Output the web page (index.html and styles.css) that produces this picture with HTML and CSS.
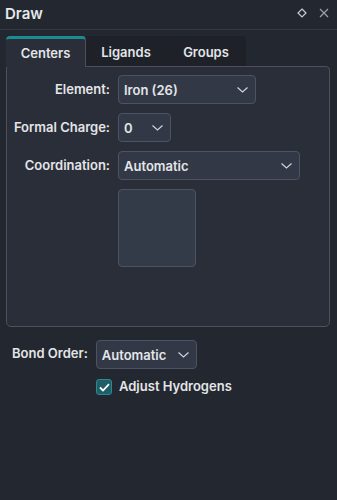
FILE: index.html
```html
<!DOCTYPE html>
<html>
<head>
<meta charset="utf-8">
<link rel="stylesheet" href="styles.css">
</head>
<body>
<div class="panel">
  <div class="titlebar">
    <span class="title">Draw</span>
    <div class="title-icons">
      <svg width="10" height="10" viewBox="0 0 10 10"><path d="M5 1 L9 5 L5 9 L1 5 Z" fill="none" stroke="#c8ccd4" stroke-width="1.2"/></svg>
      <svg width="10" height="10" viewBox="0 0 10 10"><path d="M1 1 L9 9 M9 1 L1 9" fill="none" stroke="#9ba1ab" stroke-width="1.2"/></svg>
    </div>
  </div>
  <div class="tabs">
    <div class="tab active">Centers</div>
    <div class="tab">Ligands</div>
    <div class="tab">Groups</div>
  </div>
  <div class="pane">
    <div class="form">
      <label class="lbl">Element:</label>
      <div class="select w-element"><span>Iron (26)</span><svg class="chev" width="11" height="6" viewBox="0 0 11 6"><path d="M0.5 0.5 L5.5 5 L10.5 0.5" fill="none" stroke="#d0d3d9" stroke-width="1.2"/></svg></div>
      <label class="lbl">Formal Charge:</label>
      <div class="select w-charge"><span>0</span><svg class="chev" width="11" height="6" viewBox="0 0 11 6"><path d="M0.5 0.5 L5.5 5 L10.5 0.5" fill="none" stroke="#d0d3d9" stroke-width="1.2"/></svg></div>
      <label class="lbl">Coordination:</label>
      <div class="select w-coord"><span>Automatic</span><svg class="chev" width="11" height="6" viewBox="0 0 11 6"><path d="M0.5 0.5 L5.5 5 L10.5 0.5" fill="none" stroke="#d0d3d9" stroke-width="1.2"/></svg></div>
      <div></div>
      <div class="preview"></div>
    </div>
  </div>
  <div class="bond-row">
    <label class="lbl">Bond Order:</label>
    <div class="select w-bond"><span>Automatic</span><svg class="chev" width="11" height="6" viewBox="0 0 11 6"><path d="M0.5 0.5 L5.5 5 L10.5 0.5" fill="none" stroke="#d0d3d9" stroke-width="1.2"/></svg></div>
  </div>
  <div class="check-row">
    <span class="checkbox"><svg width="11" height="9" viewBox="0 0 11 9"><path d="M1 4.5 L4 7.5 L10 1.2" fill="none" stroke="#ffffff" stroke-width="1.8"/></svg></span>
    <span class="check-label">Adjust Hydrogens</span>
  </div>
</div>
</body>
</html>
```

FILE: styles.css
```css
* { box-sizing: border-box; }
html, body {
  margin: 0;
  padding: 0;
  background: #23272f;
  width: 337px;
  height: 500px;
  overflow: hidden;
}
body {
  font-family: Inter, "Noto Sans", sans-serif;
  font-size: 13px;
  font-weight: 600;
  color: #e3e5e8;
}
.titlebar {
  height: 30px;
  display: flex;
  align-items: center;
  justify-content: space-between;
  padding: 0 8px 0 5px;
  border-bottom: 1px solid #343843;
}
.title {
  font-size: 15px;
  font-weight: 600;
  color: #e6e8eb;
  margin-top: -2px;
}
.title-icons {
  display: flex;
  gap: 12px;
  align-items: center;
  margin-top: -3px;
}
.tabs {
  display: flex;
  margin: 6px 0 0 6px;
  width: 240px;
  background: #1e2128;
  border-radius: 4px 4px 0 0;
  height: 30px;
}
.tab {
  width: 80px;
  display: flex;
  align-items: center;
  justify-content: center;
  color: #e3e5e8;
  padding-top: 1px;
}
.tab.active {
  width: 80px;
  background: #2a2e38;
  border-top: 3px solid #1d8b92;
  border-right: 1px solid #4b505c;
  border-radius: 4px 4px 0 0;
  padding-top: 0;
  margin-bottom: -1px;
  height: 31px;
  position: relative;
  z-index: 1;
}
.pane {
  margin: 0 7px 0 6px;
  height: 261px;
  background: #2a2e38;
  border: 1px solid #4b505c;
  border-radius: 0 4px 5px 5px;
}
.form {
  display: grid;
  grid-template-columns: 96px auto;
  column-gap: 8px;
  row-gap: 9px;
  padding: 8px 0 0 7px;
  align-items: center;
  justify-items: start;
}
.lbl {
  justify-self: end;
  white-space: nowrap;
  margin-top: -2px;
}
.select {
  height: 29px;
  background: #323846;
  border: 1px solid #4d5361;
  border-radius: 4px;
  display: flex;
  align-items: center;
  justify-content: space-between;
  padding: 0 7px 0 5px;
}
.select span { margin-top: 1px; }
.chev { margin-top: 1px; }
.w-element { width: 138px; }
.w-charge { width: 53px; }
.w-coord { width: 182px; }
.w-bond { width: 101px; }
.preview {
  width: 78px;
  height: 78px;
  background: #333a48;
  border: 1px solid #4d5361;
  border-radius: 4px;
}
.bond-row {
  display: flex;
  align-items: center;
  gap: 8px;
  margin: 13px 0 0 12px;
}
.bond-row .lbl { margin-top: -3px; }
.check-row {
  display: flex;
  align-items: center;
  gap: 7px;
  margin: 10px 0 0 96px;
}
.checkbox {
  width: 16px;
  height: 16px;
  border-radius: 3px;
  background: #1f5e66;
  border: 1px solid #2a8a92;
  display: flex;
  align-items: center;
  justify-content: center;
}
.check-label { margin-top: -2px; }
```
